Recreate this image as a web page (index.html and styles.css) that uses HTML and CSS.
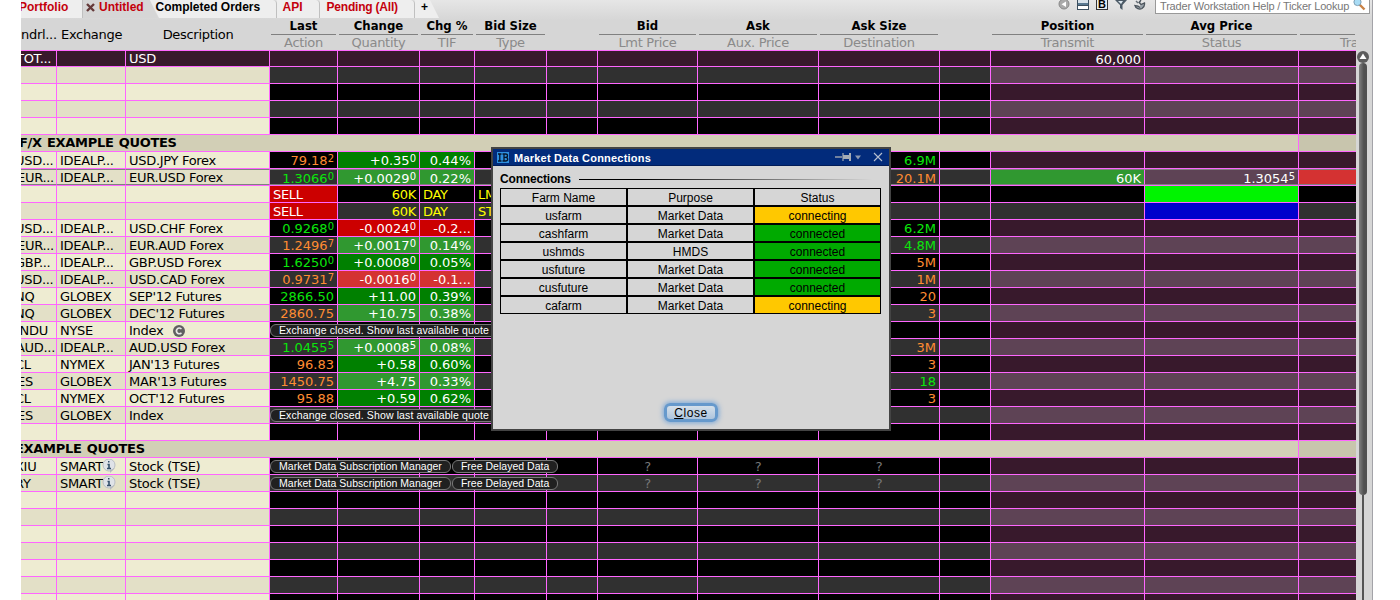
FILE: index.html
```html
<!DOCTYPE html>
<html lang="en">
<head>
    <meta charset="UTF-8">
    <title>Trader Workstation</title>
    <link rel="stylesheet" href="styles.css">
</head>
<body>
    <div class="app">
        <div class="main">
            <div class="tabbar">
                <div class="tabs">
                    <div class="tab tab-portfolio red">Portfolio</div>
                    <div class="tab tab-active red">
                        <svg width="9" height="9" viewBox="0 0 9 9"><path d="M1 1l7 7M8 1L1 8" stroke="#653a3a" stroke-width="2.4"/></svg>
                        <span>Untitled</span>
                    </div>
                    <div class="tab tab-completed">Completed Orders</div>
                    <div class="tab tab-api red">API</div>
                    <div class="tab tab-pending red">Pending (All)</div>
                    <div class="tab tab-add">+</div>
                </div>
                <div class="tools">
                    <svg width="12" height="12" viewBox="0 0 12 12"><circle cx="6" cy="4" r="5" fill="#aaa" stroke="#888"/><path d="M8 1.5v5.4L3.5 4.2z" fill="#fff"/></svg>
                    <svg width="12" height="12" viewBox="0 0 12 12"><path d="M0 0h12v10H0z" fill="#3c4f5f"/><path d="M1 0h10v3H1z" fill="#d8e2ea"/><path d="M1 3h10v2H1z" fill="#5b7a92"/><path d="M1 6h10v3H1z" fill="#fff"/></svg>
                    <span class="tool-b">B</span>
                    <svg width="12" height="12" viewBox="0 0 12 12"><path d="M0 0h12L7.5 5v5L5 8V5z" fill="#4c5a66"/><path d="M3 1h5L6 4z" fill="#dde8f0"/></svg>
                    <svg width="12" height="12" viewBox="0 0 12 12"><path d="M7 0L5 2.500l2 2L10.500 3Q11 6.500 8 8.500 5 10 2 7.500L1 5.500l3 .5 2 1.500" fill="#9aa3ab" stroke="#4b545c" stroke-width="1.300"/><path d="M2 1l2 2" stroke="#666e76" stroke-width="1.500"/></svg>
                </div>
                <div class="search">
                    <span>Trader Workstation Help / Ticker Lookup</span>
                    <svg width="13" height="12" viewBox="0 0 13 12"><path d="M6.500 4.500l5 5" stroke="#c98245" stroke-width="2.400"/><circle cx="4.500" cy="2" r="3.600" fill="#a9dcf5" stroke="#7d9fb5"/></svg>
                </div>
            </div>
            <div class="grid" id="columns"></div>
            <div class="quotes" id="quotes"></div>
        </div>
        <div class="scrollbar">
            <svg class="scroll-up" width="12" height="12" viewBox="0 0 12 12"><circle cx="6" cy="6" r="6" fill="#5c5c5c"/><path d="M6 2.5L9.5 8h-7z" fill="#fff"/></svg>
            <div class="thumb"></div>
            <div class="track"></div>
        </div>
    </div>

    <div class="dialog">
        <div class="titlebar">
            <svg width="12" height="11" viewBox="0 0 12 11"><path d="M0 0h12v11H0z" fill="#2d8fe0"/><path d="M1 2h3.500M1 9h3.500M2.800 2v7M5.500 2h3q2 0 2 1.700T8.500 5.400H7M8.500 5.400q2.200 0 2.200 1.800T8.500 9h-3M7 2v7" fill="none" stroke="#06162d" stroke-width="1.300"/></svg>
            <span class="title">Market Data Connections</span>
            <svg width="50" height="11" viewBox="0 0 50 11"><path d="M1 5h7M9 1v8" stroke="#98a0ac" stroke-width="1.300"/><path d="M9 3h6v4H9zM15 1h2v8h-2z" fill="#a5acb5"/><path d="M21 3.500h6l-3 4z" fill="#8b98b0"/><path d="M40 1l8 8M48 1l-8 8" stroke="#b5bfd0" stroke-width="1.100"/></svg>
        </div>
        <div class="dialog-body">
            <div class="legend"><span>Connections</span><div class="legend-line"></div></div>
            <div class="farms" id="farms"></div>
            <button class="close-btn"><u>C</u>lose</button>
        </div>
    </div>

    <script>
        const headers = [
            ['ndrl...'], ['Exchange'], ['Description'],
            ['Last', 'Action'], ['Change', 'Quantity'], ['Chg %', 'TIF'], ['Bid Size', 'Type'], [],
            ['Bid', 'Lmt Price'], ['Ask', 'Aux. Price'], ['Ask Size', 'Destination'], [],
            ['Position', 'Transmit'], ['Avg Price', 'Status'], ['', 'Tra']
        ];

        const closed = ['Exchange closed. Show last available quote'];
        const delayed = ['Market Data Subscription Manager', 'Free Delayed Data'];

        // [symbol, exchange, description, last, last color, change, change %, ask size, ask color]
        const rows = [
            {}, {}, {}, {},
            { section: 'F/X EXAMPLE QUOTES' },
            { q: ['USD...', 'IDEALP...', 'USD.JPY Forex', '79.18^2', 'orange', '+0.35^0', '0.44%', '6.9M', 'lime'] },
            { q: ['EUR...', 'IDEALP...', 'EUR.USD Forex', '1.3066^0', 'lime', '+0.0029^0', '0.22%', '20.1M', 'orange'], selected: true },
            { order: 'LMT', status: 'status-green' },
            { order: 'STP', status: 'status-blue' },
            { q: ['USD...', 'IDEALP...', 'USD.CHF Forex', '0.9268^0', 'lime', '-0.0024^0', '-0.2...', '6.2M', 'lime'] },
            { q: ['EUR...', 'IDEALP...', 'EUR.AUD Forex', '1.2496^7', 'orange', '+0.0017^0', '0.14%', '4.8M', 'lime'] },
            { q: ['GBP...', 'IDEALP...', 'GBP.USD Forex', '1.6250^0', 'lime', '+0.0008^0', '0.05%', '5M', 'orange'] },
            { q: ['USD...', 'IDEALP...', 'USD.CAD Forex', '0.9731^7', 'orange', '-0.0016^0', '-0.1...', '1M', 'orange'] },
            { q: ['NQ', 'GLOBEX', "SEP'12 Futures", '2866.50', 'lime', '+11.00', '0.39%', '20', 'orange'] },
            { q: ['NQ', 'GLOBEX', "DEC'12 Futures", '2860.75', 'orange', '+10.75', '0.38%', '3', 'orange'] },
            { q: ['INDU', 'NYSE', 'Index'], badge: true, pills: closed },
            { q: ['AUD...', 'IDEALP...', 'AUD.USD Forex', '1.0455^5', 'lime', '+0.0008^5', '0.08%', '3M', 'orange'] },
            { q: ['CL', 'NYMEX', "JAN'13 Futures", '96.83', 'orange', '+0.58', '0.60%', '3', 'orange'] },
            { q: ['ES', 'GLOBEX', "MAR'13 Futures", '1450.75', 'orange', '+4.75', '0.33%', '18', 'lime'] },
            { q: ['CL', 'NYMEX', "OCT'12 Futures", '95.88', 'orange', '+0.59', '0.62%', '3', 'orange'] },
            { q: ['ES', 'GLOBEX', 'Index'], pills: closed },
            {},
            { section: 'EXAMPLE QUOTES' },
            { q: ['XIU', 'SMART', 'Stock (TSE)'], info: true, pills: delayed },
            { q: ['RY', 'SMART', 'Stock (TSE)'], info: true, pills: delayed },
            {}, {}, {}, {}, {}, {}, {}
        ];

        const infoIcon = '<svg class="info" width="14" height="14" viewBox="0 0 14 14"><circle cx="7" cy="6" r="6" fill="#dfe3e8" stroke="#b9bec4"/><path d="M8 11l0 3 5-5" fill="#b4b8be"/><path d="M5.500 5.500h1.500V9.500M5 9.500h4M6 2.800h1.500" fill="none" stroke="#35506b" stroke-width="1.600"/></svg>';
        const closedIcon = '<svg class="badge" width="12" height="12" viewBox="0 0 12 12"><circle cx="6" cy="6" r="6" fill="#606060"/><path d="M8.500 4Q6 2 4.200 4T4.500 8.200Q6.500 9.300 8.500 8" fill="none" stroke="#e8e8e8" stroke-width="1.600"/></svg>';

        function price(text) {
            const [main, tick] = text.split('^');
            return tick ? `${main}<span class="tick">${tick}</span>` : main;
        }

        // Symbols are cut off by the left edge of the window
        const symbolCut = { 'USD...': 'cut-6', 'EUR...': 'cut-4', 'GBP...': 'cut-6', 'AUD...': 'cut-5', 'NQ': 'cut-6', 'INDU': 'cut-5', 'CL': 'cut-6', 'ES': 'cut-4', 'XIU': 'cut-6', 'RY': 'cut-6' };

        function renderRow(row, index) {
            const shade = index % 2 ? 'odd' : 'even';
            if (row.section) {
                return `<div class="section"><span class="${index > 10 ? 'cut-6' : 'cut-2'}">${row.section}</span><div class="section-end"></div></div>`;
            }
            const cells = Array.from({ length: 15 }, () => ['', '']);
            if (row.q) {
                const [symbol, exchange, name, last, lastColor, change, pct, size, sizeColor] = row.q;
                cells[0] = ['', `<span class="${symbolCut[symbol]}">${symbol}</span>`];
                cells[1] = ['', exchange + (row.info ? infoIcon : '')];
                cells[2] = ['', name + (row.badge ? closedIcon : '')];
                if (last) {
                    const move = change[0] === '-' ? 'down' : 'up';
                    cells[3] = ['num ' + lastColor, price(last)];
                    cells[4] = ['num ' + move, price(change)];
                    cells[5] = ['num ' + move, pct];
                    cells[10] = ['num ' + sizeColor, size];
                }
            }
            if (row.info) {
                cells[8] = cells[9] = cells[10] = ['unknown', '?'];
            }
            if (row.selected) {
                cells[12] = ['num up', '60K'];
                cells[13] = ['num', price('1.3054^5')];
                cells[14] = ['down', ''];
            }
            if (row.order) {
                cells[3] = ['sell', 'SELL'];
                cells[4] = ['num yellow', '60K'];
                cells[5] = ['yellow', 'DAY'];
                cells[6] = ['yellow', row.order];
                cells[13] = [row.status, ''];
            }
            if (row.pills) {
                const kind = row.info ? 'pills narrow' : 'pills';
                cells[3][1] = `<div class="${kind}">${row.pills.map(p => `<span class="pill">${p}</span>`).join('')}</div>`;
            }
            const extra = (row.selected ? ' selected' : '') + (row.order ? ' order' : '');
            return `<div class="grid row ${shade}${extra}">` +
                cells.map((c, i) => `<div class="cell ${i < 3 ? 'name' : i > 11 ? 'pos' : 'quote'} ${c[0]}">${c[1]}</div>`).join('') +
                '</div>';
        }

        document.getElementById('columns').innerHTML = headers.map(([top, bottom], i) =>
            i < 3 ? `<div class="head single head-${i}">${top}</div>`
                  : `<div class="head">${bottom ? `<b>${top}</b><span>${bottom}</span>` : ''}</div>`
        ).join('');

        const totalCells = Array(15).fill('');
        totalCells[0] = '<span class="cut-5">TOT...</span>';
        totalCells[2] = 'USD';
        totalCells[12] = '60,000';
        document.getElementById('quotes').innerHTML =
            '<div class="grid row total">' +
            totalCells.map((t, i) => `<div class="cell ${i === 12 ? 'num' : ''}">${t}</div>`).join('') +
            '</div>' + rows.map(renderRow).join('');

        const farms = [
            ['Farm Name', 'Purpose', 'Status'],
            ['usfarm', 'Market Data', 'connecting'],
            ['cashfarm', 'Market Data', 'connected'],
            ['ushmds', 'HMDS', 'connected'],
            ['usfuture', 'Market Data', 'connected'],
            ['cusfuture', 'Market Data', 'connected'],
            ['cafarm', 'Market Data', 'connecting']
        ];
        document.getElementById('farms').innerHTML =
            farms.map(f => f.map(t => `<div class="${t}">${t}</div>`).join('')).join('');
    </script>
</body>
</html>
```
FILE: styles.css
```css
* {
    box-sizing: border-box;
}

body {
    margin: 0;
    height: 600px;
    overflow: hidden;
    background: #fff;
    font-family: "DejaVu Sans", sans-serif;
    font-size: 13px;
    letter-spacing: -0.3px;
    color: #000;
}

svg {
    flex: none;
}

.app {
    display: flex;
    width: 1352px;
    height: 600px;
    margin-left: 21px;
    background: linear-gradient(#e6e6e6, #d6d6d6 20px);
    border-right: 1px solid #a3a3a8;
    overflow: hidden;
}

.main {
    width: 1335px;
    flex: none;
}

/* tabs */
.tabbar {
    display: flex;
    width: 1351px;
    height: 18px;
    font-family: "Liberation Sans", sans-serif;
    font-size: 12px;
    font-weight: bold;
    letter-spacing: 0;
}

.tabs {
    display: flex;
    width: 1037px;
}

.tab {
    height: 18px;
    line-height: 14px;
    background: #eeeeee;
    border-right: 1px solid #c0c0c0;
    white-space: nowrap;
}

.red {
    color: #c4000c;
}

.tab-portfolio {
    width: 62px;
    text-indent: -2px;
}

.tab-active {
    display: flex;
    align-items: center;
    gap: 4px;
    width: 75px;
    height: 18px;
    padding: 0 0 4px 3px;
    background: #d6d6d6;
    border: 0;
    clip-path: polygon(0 0, 67px 0, 75px 100%, 0 100%);
}

.tab-completed {
    width: 127px;
    margin-left: -8px;
    padding-left: 6px;
    clip-path: polygon(0 0, 100% 0, 100% 100%, 9px 100%);
}

.tab-completed,
.tab-api,
.tab-pending {
    border-radius: 0 4px 0 0;
}

.tab-completed,
.tab-api,
.tab-pending {
    text-indent: -0.5px;
}

.tab-api {
    width: 43px;
    padding-left: 6px;
}

.tab-pending {
    width: 95px;
    padding-left: 7px;
    letter-spacing: -0.2px;
}

.tab-add {
    width: 24px;
    padding-left: 6px;
    border: 0;
    clip-path: polygon(0 0, 15px 0, 24px 100%, 0 100%);
}

.tools {
    display: flex;
    gap: 7px;
    width: 97px;
}

.tool-b {
    width: 12px;
    height: 10px;
    border: 1px solid #333;
    border-top: 0;
    background: #e6edf2;
    font-size: 11px;
    line-height: 9px;
    text-align: center;
}

.search {
    display: flex;
    justify-content: space-between;
    width: 215px;
    height: 14px;
    padding: 0 3px 0 4px;
    background: #fff;
    border: 1px solid #999;
    border-top: 0;
    color: #777;
    font-size: 11px;
    font-weight: normal;
    line-height: 12px;
    letter-spacing: -0.18px;
    white-space: nowrap;
}

/* column headers */
.grid {
    display: grid;
    grid-template-columns: 36px 69px 144px 68px 82px 55px 72px 51px 100px 121px 121px 51px 154px 154px 58px;
    width: 1335px;
    overflow: hidden;
}

#columns {
    height: 32px;
}

.head {
    padding: 0 2px 0 1px;
    text-align: center;
    white-space: nowrap;
    overflow: hidden;
}

.head b {
    display: block;
    height: 17px;
    border-bottom: 1px solid #808080;
    font-family: "DejaVu Sans Condensed", "DejaVu Sans", sans-serif;
    font-stretch: condensed;
    letter-spacing: 0;
    line-height: 16px;
}

.head span {
    display: block;
    color: #8a8a8a;
    line-height: 16px;
}

.head:last-child span {
    padding-left: 40px;
    text-align: left;
}

.single {
    padding: 8px 0 0;
    line-height: 17px;
    text-align: center;
}

.head-0 {
    text-align: left;
}

.head-1 {
    text-align: left;
    padding-left: 4px;
}

/* quotes */
.quotes {
    border-top: 1px solid #ff66ff;
}

.row {
    height: 17px;
    border-bottom: 1px solid #ff66ff;
    position: relative;
}

.cell {
    height: 16px;
    padding: 0 3px;
    border-right: 1px solid #ff66ff;
    line-height: 16px;
    white-space: nowrap;
}

.cell.name {
    padding-top: 1px;
}

.cell:last-child {
    border-right: 0;
}

.cell:first-child {
    padding-left: 0;
    overflow: hidden;
}

.total {
    height: 16px;
    background: #38192c;
    color: #fff;
}

.total .cell {
    height: 15px;
}

.odd .name { background: #eeecd2; }
.even .name { background: #e3e0c7; }
.odd .quote { background: #000; }
.even .quote { background: #303030; }
.odd .pos { background: #38192c; }
.even .pos { background: #5e4355; }
.odd.order .pos { background: #000; }
.even.order .pos { background: #303030; }

.cut-2 { margin-left: -2px; }
.cut-4 { margin-left: -4px; }
.cut-5 { margin-left: -5px; }
.cut-6 { margin-left: -6px; }

.num,
.sell,
.yellow {
    padding-top: 1px;
    color: #fff;
    letter-spacing: 0;
}

.num {
    text-align: right;
}

.sell,
.cell.yellow {
    letter-spacing: -0.3px;
}

.orange { color: #ff8c32; }
.lime { color: #0be60b; }
.yellow { color: #ffff00; }

.odd .up { background: #008000; }
.even .up { background: #309830; }
.odd .down { background: #cc0000; }
.even .down { background: #d43232; }
.row .cell.sell { background: #cc0000; }
.row .cell.status-green { background: #00f400; }
.row .cell.status-blue { background: #0000cc; }

.tick {
    font-size: 10px;
    line-height: 1px;
    vertical-align: 3px;
}

.unknown {
    padding-top: 1px;
    color: #777;
    text-align: center;
}

.selected .cell {
    border-top: 1px solid #808080;
    border-bottom: 1px solid #808080;
    line-height: 15px;
}

.selected .cell.name {
    padding-top: 0;
}

.info {
    margin-left: -1px;
    vertical-align: -2px;
}

.badge {
    margin-left: 10px;
    vertical-align: -2px;
}

.pills {
    position: absolute;
    left: 249px;
    top: 2px;
    display: flex;
    gap: 1px;
}

.pill {
    height: 13px;
    padding: 0 8px;
    background: #202020;
    border: 1px solid #777;
    border-radius: 6px;
    color: #fff;
    font-family: "Liberation Sans", sans-serif;
    font-size: 10.5px;
    line-height: 11px;
    letter-spacing: 0.12px;
}

.narrow .pill {
    letter-spacing: 0.02px;
}

.section {
    display: flex;
    justify-content: space-between;
    height: 17px;
    background: #d2cfb6;
    border-bottom: 1px solid #ff66ff;
    font-weight: bold;
    line-height: 16px;
    word-spacing: 1px;
    overflow: hidden;
}

.section-end {
    width: 58px;
    background: #c8c5ad;
    border-left: 1px solid #ff66ff;
}

/* scrollbar */
.scrollbar {
    display: flex;
    flex-direction: column;
    align-items: center;
    width: 14px;
    padding-top: 51px;
    margin-right: 2px;
}

.thumb {
    width: 8px;
    height: 432px;
    background: linear-gradient(90deg, #808080, #505050 60%);
    border-radius: 4px;
}

.track {
    width: 2px;
    flex: 1;
    background: #555;
}

/* dialog */
.dialog {
    position: absolute;
    left: 491px;
    top: 147px;
    width: 400px;
    height: 284px;
    background: #d6d6d6;
    border: 2px solid #444;
    font-family: "Liberation Sans", sans-serif;
    font-size: 12px;
    letter-spacing: 0;
}

.titlebar {
    display: flex;
    align-items: center;
    height: 17px;
    padding: 0 5px 0 4px;
    background: #022b7b;
    border-bottom: 1px solid #011c58;
}

.title {
    flex: 1;
    padding: 1px 0 0 5px;
    color: #fff;
    font-size: 11px;
    font-weight: bold;
    letter-spacing: 0.22px;
}

.dialog-body {
    display: flex;
    flex-direction: column;
    align-items: center;
    padding: 5px 7px 0;
}

.legend {
    display: flex;
    align-items: center;
    gap: 8px;
    width: 100%;
    height: 15px;
    margin-bottom: 2px;
    padding-right: 9px;
    font-weight: bold;
    letter-spacing: -0.18px;
}

.legend-line {
    flex: 1;
    height: 1px;
    margin-top: 1px;
    background: linear-gradient(90deg, #000 20%, #d6d6d6);
}

.farms {
    display: grid;
    grid-template-columns: repeat(3, 127px);
    align-self: flex-start;
}

.farms div {
    height: 18px;
    border: 1px solid #000;
    line-height: 18px;
    text-align: center;
}

.farms .connecting {
    background: #ffc800;
}

.farms .connected {
    background: #00aa00;
}

.close-btn {
    width: 54px;
    height: 19px;
    margin-top: 89px;
    padding: 0;
    background: linear-gradient(#d5e0ea, #adc4dd);
    border: 3px solid #6699cc;
    border-radius: 6px;
    box-shadow: 0 0 5px 1px #7aa7d8;
    font-family: "Liberation Sans", sans-serif;
    font-size: 12px;
    line-height: 14px;
    letter-spacing: 0.6px;
}
```
